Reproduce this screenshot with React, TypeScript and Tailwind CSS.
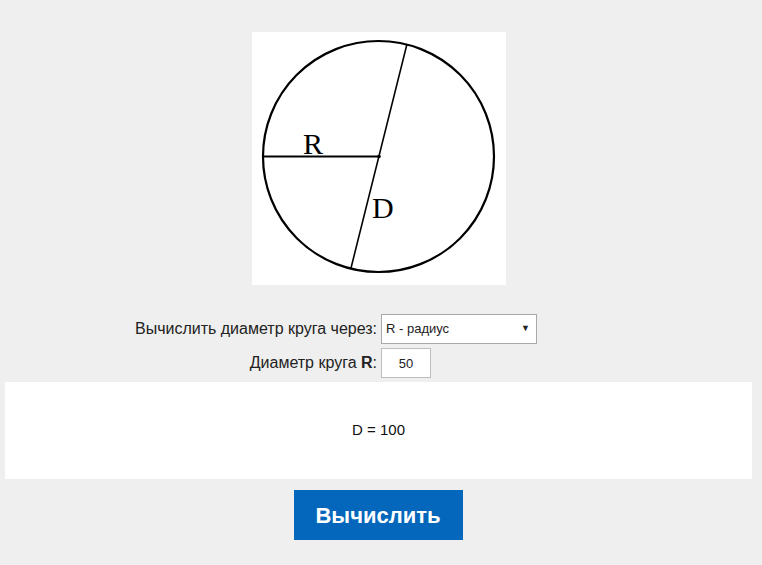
import { useState } from "react";

const CircleFigure: React.FC = () => (
  <div className="w-[254px] h-[253px] bg-white">
    <svg width="254" height="253" viewBox="0 0 254 253">
      <circle cx="126.5" cy="124.5" r="115.5" fill="none" stroke="#000" strokeWidth="2.2" />
      <line x1="11" y1="124.5" x2="127" y2="124.5" stroke="#000" strokeWidth="2" />
      <line x1="155" y1="12" x2="99" y2="236" stroke="#000" strokeWidth="1.6" />
      <circle cx="127" cy="124.5" r="1.8" fill="#000" />
      <text x="51" y="122" fontFamily="'Liberation Serif', serif" fontSize="30" fill="#000">
        R
      </text>
      <text x="120" y="186" fontFamily="'Liberation Serif', serif" fontSize="30" fill="#000">
        D
      </text>
    </svg>
  </div>
);

const App: React.FC = () => {
  const [mode, setMode] = useState("r");
  const [radius, setRadius] = useState("50");
  const [result, setResult] = useState("D = 100");

  const calc = () => {
    const v = parseFloat(radius.replace(",", "."));
    if (isNaN(v)) return;
    setResult(`D = ${mode === "r" ? v * 2 : v}`);
  };

  return (
    <div
      className="min-h-[565px] bg-[#efefef] pt-[32px] text-[#222]"
      style={{ fontFamily: "'Liberation Sans', Arial, sans-serif" }}
    >
      {/* Figure */}
      <div className="flex justify-center pr-[4px]">
        <CircleFigure />
      </div>

      {/* Form */}
      <div className="mt-[29px] flex flex-col gap-[4px]">
        <div className="flex items-center">
          <label className="w-[381px] text-right pr-[4px] text-[16px] text-[#222]">
            Вычислить диаметр круга через:
          </label>
          <div className="relative w-[156px] h-[30px] bg-white border border-[#a9a9a9]">
            <select
              value={mode}
              onChange={(e) => setMode(e.target.value)}
              className="appearance-none w-full h-full bg-transparent pl-[4px] text-[13px] outline-none"
            >
              <option value="r">R - радиус</option>
              <option value="s">S - площадь</option>
            </select>
            <span className="absolute right-[6px] top-[7px] text-[9px] pointer-events-none">▼</span>
          </div>
        </div>
        <div className="flex items-center">
          <label className="w-[381px] text-right pr-[4px] text-[16px] text-[#222]">
            Диаметр круга <b>R</b>:
          </label>
          <input
            value={radius}
            onChange={(e) => setRadius(e.target.value)}
            className="w-[50px] h-[30px] bg-white border border-[#bdbdbd] text-center text-[13px] outline-none"
          />
        </div>
      </div>

      {/* Result */}
      <div className="mt-[4px] ml-[5px] w-[747px] h-[97px] bg-white flex items-center justify-center text-[15px] text-[#111]">
        {result}
      </div>

      {/* Button */}
      <div className="mt-[11px] flex justify-center pr-[6px]">
        <button
          onClick={calc}
          className="w-[169px] h-[50px] bg-[#0467bb] text-white font-bold text-[22px]"
        >
          Вычислить
        </button>
      </div>
    </div>
  );
};

export default App;
